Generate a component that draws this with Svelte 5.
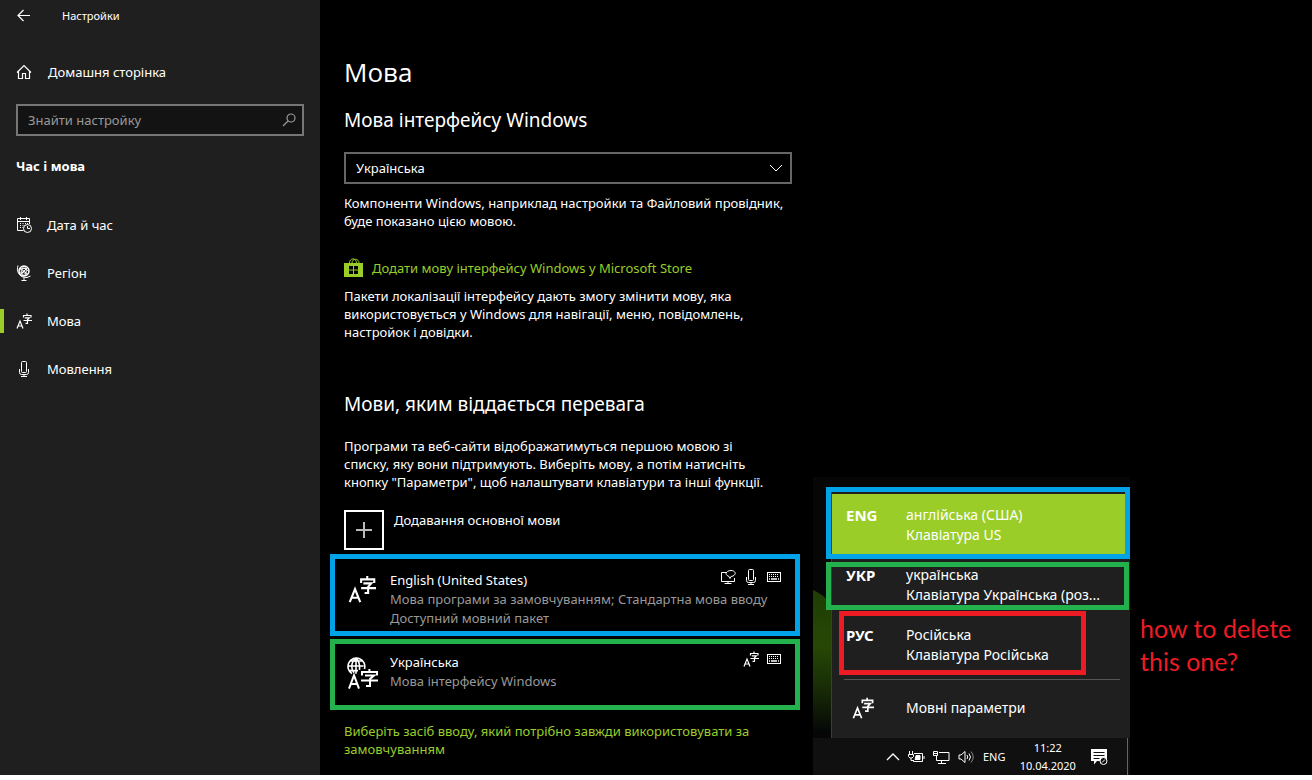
<script>
    const nav = [
        { id: 'calendar', label: 'Дата й час' },
        { id: 'globe', label: 'Регіон' },
        { id: 'language', label: 'Мова', active: true },
        { id: 'mic', label: 'Мовлення' },
    ];

    const languages = [
        {
            name: 'English (United States)',
            lines: ['Мова програми за замовчуванням; Стандартна мова вводу', 'Доступний мовний пакет'],
            icon: 'language',
            features: ['display', 'mic', 'keyboard'],
            mark: 'blue',
        },
        {
            name: 'Українська',
            lines: ['Мова інтерфейсу Windows'],
            icon: 'globe-language',
            features: ['language', 'keyboard'],
            mark: 'green',
        },
    ];

    const layouts = [
        { code: 'ENG', name: 'англійська (США)', keyboard: 'Клавіатура US', mark: 'blue' },
        { code: 'УКР', name: 'українська', keyboard: 'Клавіатура Українська (роз...', mark: 'green' },
        { code: 'РУС', name: 'Російська', keyboard: 'Клавіатура Російська', mark: 'red' },
    ];

    let displayLanguage = 'Українська';
</script>

{#snippet icon(name, size = 16)}
    <svg class="icon" width={size} height={size} viewBox="0 0 16 16" fill="none" stroke="currentColor" stroke-width="1" aria-hidden="true">
        {#if name === 'back'}
            <path d="M14 7.500H2.500M7.500 2 2 7.500 7.500 13" stroke-width="1.200" />
        {:else if name === 'home'}
            <path d="M1 8.500 8 1.500l7 7M2.500 7v7.500h4v-5h3v5h4V7" stroke-width="1.200" />
        {:else if name === 'search'}
            <circle cx="10" cy="6" r="4" stroke-width="1.200" /><path d="M7 9 2 14" stroke-width="1.200" />
        {:else if name === 'chevron'}
            <path d="M2 5l6 6 6-6" />
        {:else if name === 'calendar'}
            <path d="M7.500 13.500H1.500v-12h12V7M1.500 4.500h12M4.500 0v3M10.500 0v3" />
            <path d="M4 6.500h1M6.500 6.500h1M9 6.500h1M11 6.500h1M4 8.500h1M6.500 8.500h1M4 10.500h1M6.500 10.500h1" />
            <circle cx="11.500" cy="11.500" r="4" /><path d="M11.500 9v2.500H14" />
        {:else if name === 'globe'}
            <circle cx="8" cy="6" r="5" stroke-width="1.500" />
            <path d="M4 3l8 6.500M4.500 9.500l7-7M3.500 5.500c3-3 6-3 9 1M3.500 7.500c2-1 6 0 7 3M8 1c-3 3-3 7 0 10M8 1c3 3 3 7 0 10M2 .5C0 6 3 13 11 12.500l3.500-1.500M8 12.500v3M5.500 15.500h5" />
        {:else if name === 'language'}
            <path d="M1 15.500 4 8l3 7.500M2 13h4M11 .5v2M7.500 4.500V2.500H15v2M8.800 4.800h4.500L11.500 6.800v3.500H9.500M7.500 7.500h8.500" stroke-width="1.200" />
        {:else if name === 'globe-language'}
            <path d="M3 8.300A4.200 4.200 0 1 1 9.200 6M.8 4.500h8M2 2h6M2 6.800h4M5 .4v8M5 .4c-2.800 2.500-2.500 5.500-1 7.500M5 .4c1.800 2 2 4 1.700 6" stroke-width=".8" />
            <path d="M1.500 15.800 4 9.200l2.500 6.600M2.500 13.500h3M11.700 6v1.500M8 9.300V7.500h7.500v1.800M9.500 9.300h4.500L12 11v3.500H10M7.500 11.800H16" />
        {:else if name === 'mic'}
            <rect x="5.500" y=".5" width="5" height="11" rx="1" /><path d="M3.500 8v3.500q0 2 2 2h5q2 0 2-2V8M8 13.500v2M5 15.500h6" />
        {:else if name === 'display'}
            <path d="M7 3.500H1.500v9h13V9M8 12.500v2M4.500 14.500h7" /><path d="M8 7C4 5 7 1.500 11 1.500s6 3.500 2 5.500l-2 .5-1 2-1.500-2.500Z" />
        {:else if name === 'keyboard'}
            <rect x="1.500" y="3.500" width="13" height="9" /><path d="M3 5.500h10M3 7.500h10" stroke-dasharray="1 1" /><path d="M3 10h1M5 10h6M12 10h1" stroke-width="1.500" />
        {/if}
    </svg>
{/snippet}

<div class="screen">
    <aside class="sidebar">
        <header class="titlebar">
            <button class="back" aria-label="Назад">{@render icon('back')}</button>
            <span>Настройки</span>
        </header>
        <a class="home" href="#home">{@render icon('home')}<span>Домашня сторінка</span></a>
        <label class="search">
            <input type="text" placeholder="Знайти настройку" aria-label="Знайти настройку" />
            {@render icon('search')}
        </label>
        <h2 class="group">Час і мова</h2>
        <nav>
            {#each nav as item}
                <a class="nav-item" class:active={item.active} href="#{item.id}">{@render icon(item.id)}<span>{item.label}</span></a>
            {/each}
        </nav>
    </aside>

    <main class="content">
        <h1>Мова</h1>
        <h2><label for="display-language">Мова інтерфейсу Windows</label></h2>
        <div class="select">
            <select id="display-language" bind:value={displayLanguage}>
                <option>Українська</option>
                <option>English (United States)</option>
            </select>
            {@render icon('chevron')}
        </div>
        <p>Компоненти Windows, наприклад настройки та Файловий провідник, буде показано цією мовою.</p>

        <a class="store" href="#store">
            <svg width="20" height="20" viewBox="0 0 20 20" aria-hidden="true">
                <path d="M0 5h19v14H0z" fill="currentColor" />
                <path d="M5.500 5c0-5.500 7-5.500 7 0M8 5c0-5 7-5 7 0" fill="none" stroke="currentColor" />
                <path d="M5 8h4v3.500H5zM10 8h4v3.500h-4zM5 12.500h4V16H5zM10 12.500h4V16h-4z" fill="#000" />
            </svg>
            <span>Додати мову інтерфейсу Windows у Microsoft Store</span>
        </a>
        <p>Пакети локалізації інтерфейсу дають змогу змінити мову, яка використовується у Windows для навігації, меню, повідомлень, настройок і довідки.</p>

        <h2 class="preferred">Мови, яким віддається перевага</h2>
        <p class="hint">Програми та веб-сайти відображатимуться першою мовою зі списку, яку вони підтримують. Виберіть мову, а потім натисніть кнопку "Параметри", щоб налаштувати клавіатури та інші функції.</p>
        <button class="add">
            <span class="plus"><svg width="16" height="16" viewBox="0 0 16 16" aria-hidden="true"><path d="M8 0v16M0 8h16" stroke="#bbb" stroke-width="2" /></svg></span>
            <span>Додавання основної мови</span>
        </button>

        <ul class="languages">
            {#each languages as language}
                <li class="language {language.mark}">
                    <div class="language-icon">{@render icon(language.icon, language.icon === 'language' ? 28 : 32)}</div>
                    <div class="language-text">
                        <span class="name">{language.name}</span>
                        {#each language.lines as line}
                            <span>{line}</span>
                        {/each}
                    </div>
                    <div class="features">
                        {#each language.features as feature}
                            {@render icon(feature)}
                        {/each}
                    </div>
                </li>
            {/each}
        </ul>
        <a class="override" href="#input">Виберіть засіб вводу, який потрібно завжди використовувати за замовчуванням</a>
    </main>

    <!-- language switcher with the tray, floating over the settings window -->
    <section class="overlay">
        <div class="wallpaper">
            <svg class="hill" width="18" height="140" viewBox="0 0 18 140" aria-hidden="true">
                <defs>
                    <linearGradient id="hill" x1="0" y1="0" x2="0" y2="1">
                        <stop offset="0" stop-color="#1f3d04" />
                        <stop offset=".4" stop-color="#264805" />
                        <stop offset=".7" stop-color="#182c06" />
                        <stop offset="1" stop-color="#060906" />
                    </linearGradient>
                </defs>
                <path d="M0 0q10 4 18 14v126H0z" fill="url(#hill)" />
            </svg>
            <div class="flyout">
                {#each layouts as layout}
                    <button class="layout" class:selected={layout.code === 'ENG'}>
                        <b>{layout.code}</b>
                        <span>{layout.name}<br />{layout.keyboard}</span>
                        <i class="mark {layout.mark}"></i>
                    </button>
                {/each}
                <hr />
                <button class="options">{@render icon('language', 22)}<span>Мовні параметри</span></button>
            </div>
        </div>
        <footer class="tray">
            <svg width="14" height="16" viewBox="0 0 14 16" fill="none" stroke="currentColor" stroke-width="1.300" aria-hidden="true"><path d="M1 11l6-6 6 6" /></svg>
            <svg width="17" height="16" viewBox="0 0 17 16" fill="none" stroke="currentColor" aria-hidden="true">
                <path d="M6 4.500h8.500v8h-9V11M16 7v3" /><path d="M8 6.500h4v4H7z" fill="currentColor" /><path d="M1.500 2v3M4.500 2v3M.5 5.500h5v2L4 9H2L.5 7.500zM3 9v2.500h2.500" />
            </svg>
            <svg width="17" height="16" viewBox="0 0 17 16" fill="none" stroke="currentColor" aria-hidden="true">
                <path d="M6 3.500h10v8H3.500V7M8.500 12v3M5 14.500h8" /><path d="M.5 2.500h4v4h-4zM1 4.500h3" />
            </svg>
            <svg width="17" height="16" viewBox="0 0 17 16" fill="none" stroke="currentColor" aria-hidden="true">
                <path d="M1 6v4h2l4 3.500v-11L3 6zM9 6q1.500 2 0 4M11 4.500q3 3.500 0 7" /><path d="M13 2.500q4.500 5.500 0 11" opacity=".5" />
            </svg>
            <span>ENG</span>
            <time>11:22<br />10.04.2020</time>
            <svg width="18" height="18" viewBox="0 0 18 18" aria-hidden="true">
                <path d="M1 1h16v12H7l-3 3.500V13H1z" fill="#fff" /><path d="M3.500 4.500h11M3.500 7.500h11M3.500 10.500h6" stroke="#101010" />
                <circle cx="13.500" cy="13" r="3.500" fill="#101010" stroke="#fff" /><path d="M12 14.500l3-3" stroke="#fff" />
            </svg>
        </footer>
    </section>
    <p class="note">how to delete<br />this one?</p>
</div>

<style>
    :global(body) {
        background: #fff;
    }

    .screen {
        position: relative;
        display: grid;
        grid-template-columns: 320px 1fr;
        min-height: calc(100vh - 5px);
        background: #000;
        color: #fff;
        font-family: "Noto Sans", "Open Sans", sans-serif;
        font-size: 13px;
        line-height: 18px;
    }

    .icon {
        flex: none;
    }

    button,
    input,
    select {
        font: inherit;
        color: inherit;
        border: 0;
        padding: 0;
        background: none;
        text-align: left;
    }

    a {
        color: inherit;
        text-decoration: none;
    }

    h1,
    h2,
    p,
    ul {
        margin: 0;
        padding: 0;
        font-weight: 400;
    }

    .sidebar {
        background: #1f1f1f;
    }

    .titlebar {
        display: flex;
        align-items: center;
        gap: 30px;
        height: 32px;
        padding-left: 16px;
        font-size: 11px;
    }

    .back {
        display: flex;
    }

    .home,
    .nav-item {
        display: flex;
        align-items: center;
        gap: 15px;
        height: 48px;
        padding-left: 16px;
    }

    .home {
        gap: 16px;
        margin-top: 16px;
    }

    .search {
        display: flex;
        align-items: center;
        height: 28px;
        margin: 8px 16px 0;
        padding: 0 5px 0 10px;
        border: 2px solid #767676;
        background: #131313;
        color: #999;
    }

    .search input {
        flex: 1;
        min-width: 0;
        outline: 0;
    }

    .search input::placeholder {
        color: #999;
        opacity: 1;
    }

    .group {
        margin: 21px 16px 26px;
        font-size: 13px;
        font-weight: 700;
    }

    .nav-item.active {
        background: linear-gradient(#9acd27, #9acd27) 0 50% / 4px 24px no-repeat;
    }

    .content {
        width: 456px;
        padding: 54px 0 16px 24px;
    }

    h1 {
        font-family: "Open Sans", "Noto Sans", sans-serif;
        font-size: 26px;
        line-height: 36px;
    }

    .content h2 {
        margin-top: 16px;
        font-size: 19px;
        line-height: 28px;
    }

    .select {
        display: flex;
        align-items: center;
        width: 448px;
        height: 32px;
        margin: 18px 0 10px;
        border: 2px solid #666;
        box-sizing: border-box;
    }

    .select select {
        flex: 1;
        appearance: none;
        padding-left: 10px;
    }

    .select .icon {
        margin-right: 6px;
        pointer-events: none;
    }

    .store {
        display: flex;
        align-items: center;
        gap: 8px;
        margin: 28px 0 9px;
        color: #9acd27;
    }

    .content .preferred {
        margin: 49px 0 19px;
    }

    .hint {
        max-width: 430px;
    }

    .add {
        display: flex;
        gap: 10px;
        margin-top: 19px;
        line-height: 20px;
    }

    .plus {
        display: grid;
        place-items: center;
        width: 36px;
        height: 36px;
        border: 2px solid #fff;
    }

    .languages {
        display: grid;
        gap: 3px;
        width: 470px;
        margin: 4px 0 12px -14px;
        list-style: none;
    }

    .language {
        display: flex;
        gap: 12px;
        padding: 12px 13px 3px 11px;
        border: 5px solid;
        line-height: 19px;
    }

    .language.green {
        padding: 9px 13px 14px 11px;
    }

    .language-icon {
        display: flex;
        justify-content: center;
        width: 32px;
        height: 36px;
        padding-top: 4px;
        box-sizing: border-box;
    }

    .language-text {
        flex: 1;
        display: flex;
        flex-direction: column;
        color: #999;
        white-space: nowrap;
    }

    .name {
        color: #fff;
    }

    .features {
        display: flex;
        align-items: center;
        gap: 7px;
        height: 12px;
        /* the second text line runs on under the icons */
        margin-left: -100px;
    }

    .blue {
        border-color: #00a2e8;
    }

    .green {
        border-color: #22b14c;
    }

    .red {
        border-color: #ed1c24;
    }

    .override {
        display: block;
        color: #9acd27;
    }

    .overlay {
        position: absolute;
        left: 813px;
        bottom: -1px;
        width: 317px;
    }

    .wallpaper {
        position: relative;
        padding: 12px 0 0 18px;
        background: #050605;
    }

    .hill {
        position: absolute;
        left: 0;
        bottom: 8px;
    }

    .flyout {
        padding-top: 5px;
        border-left: 1px solid #3c3c3c;
        background: #1f1f1f;
        font-size: 14px;
        line-height: 20px;
    }

    .layout {
        position: relative;
        display: grid;
        grid-template-columns: 60px 1fr;
        align-content: center;
        width: 100%;
        height: 60px;
        padding: 2px 0 0 14px;
        white-space: nowrap;
    }

    .layout b {
        font-size: 15px;
    }

    .layout.selected {
        background: linear-gradient(#9acd27, #9acd27) 0 0 / 294px 100% no-repeat;
    }

    .mark {
        position: absolute;
        border-width: 5px;
        border-style: solid;
    }

    .mark.blue {
        inset: -7px 0 -5px -6px;
    }

    .mark.green {
        inset: 8px 1px 4px -6px;
    }

    .mark.red {
        inset: -3px 44px -1px 7px;
    }

    hr {
        height: 1px;
        margin: 5px 10px 0 12px;
        border: 0;
        background: #555;
    }

    .options {
        display: flex;
        align-items: center;
        gap: 32px;
        width: 100%;
        height: 58px;
        padding: 0 0 2px 20px;
    }

    .tray {
        display: flex;
        align-items: center;
        gap: 8px;
        height: 38px;
        padding: 0 19px 0 73px;
        border-right: 1px solid #666;
        margin-right: 2px;
        background: #101010;
        box-shadow: 2px 0 #101010;
        font-size: 11px;
    }

    time {
        flex: 1;
        text-align: center;
    }

    .note {
        position: absolute;
        left: 1140px;
        top: 612px;
        color: #ed1c24;
        font-family: Lato, sans-serif;
        font-size: 25px;
        line-height: 33px;
    }
</style>
